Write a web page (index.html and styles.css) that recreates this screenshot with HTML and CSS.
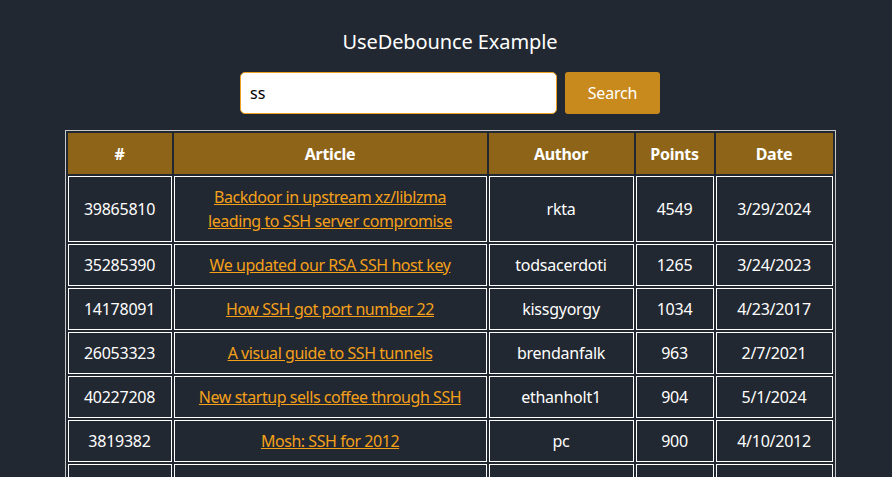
FILE: index.html
```html
<!DOCTYPE html>
<html lang="en">
<head>
<meta charset="utf-8">
<title>UseDebounce Example</title>
<link rel="stylesheet" href="styles.css">
</head>
<body>
<main class="page">
  <h1 class="title">UseDebounce Example</h1>
  <form class="search">
    <input class="search-input" type="text" value="ss">
    <button class="search-btn" type="button">Search</button>
  </form>
  <table class="results">
    <colgroup>
      <col class="c-id"><col class="c-article"><col class="c-author"><col class="c-points"><col class="c-date">
    </colgroup>
    <thead>
      <tr><th>#</th><th>Article</th><th>Author</th><th>Points</th><th>Date</th></tr>
    </thead>
    <tbody>
      <tr><td>39865810</td><td class="article"><a href="#">Backdoor in upstream xz/liblzma leading to SSH server compromise</a></td><td>rkta</td><td>4549</td><td>3/29/2024</td></tr>
      <tr><td>35285390</td><td class="article"><a href="#">We updated our RSA SSH host key</a></td><td>todsacerdoti</td><td>1265</td><td>3/24/2023</td></tr>
      <tr><td>14178091</td><td class="article"><a href="#">How SSH got port number 22</a></td><td>kissgyorgy</td><td>1034</td><td>4/23/2017</td></tr>
      <tr><td>26053323</td><td class="article"><a href="#">A visual guide to SSH tunnels</a></td><td>brendanfalk</td><td>963</td><td>2/7/2021</td></tr>
      <tr><td>40227208</td><td class="article"><a href="#">New startup sells coffee through SSH</a></td><td>ethanholt1</td><td>904</td><td>5/1/2024</td></tr>
      <tr><td>3819382</td><td class="article"><a href="#">Mosh: SSH for 2012</a></td><td>pc</td><td>900</td><td>4/10/2012</td></tr>
      <tr><td>20786051</td><td class="article"><a href="#">SSH Tips and Tricks</a></td><td>sams99</td><td>881</td><td>8/24/2019</td></tr>
    </tbody>
  </table>
</main>
</body>
</html>
```

FILE: styles.css
```css
html, body {
  margin: 0;
  padding: 0;
  background: #222831;
}

body {
  color: #ffffff;
  font-family: "Noto Sans", "Open Sans", sans-serif;
  font-size: 16px;
}

.page {
  display: flex;
  flex-direction: column;
  align-items: center;
  padding: 28px 0 0 8px;
}

.title {
  margin: 0;
  font-size: 20px;
  font-weight: 400;
  line-height: 28px;
  letter-spacing: -0.1px;
}

.search {
  display: flex;
  gap: 8px;
  margin-top: 16px;
}

.search-input {
  box-sizing: border-box;
  width: 317px;
  height: 42px;
  padding: 0 9px;
  border: 1px solid #f0a020;
  border-radius: 5px;
  background: #ffffff;
  color: #000000;
  font-family: inherit;
  font-size: 16px;
  outline: none;
}

.search-btn {
  box-sizing: border-box;
  width: 95px;
  height: 42px;
  border: none;
  border-radius: 3px;
  background: #c98a1d;
  color: #ffffff;
  font-family: inherit;
  font-size: 16px;
  letter-spacing: -0.2px;
}

.results {
  margin-top: 16px;
  width: 770px;
  table-layout: fixed;
  border: 1px solid #c8c8c8;
  border-spacing: 2px;
}

.c-id { width: 104px; }
.c-article { width: 313px; }
.c-author { width: 145px; }
.c-points { width: 78px; }
.c-date { width: 117px; }

.results th {
  background: #8e6518;
  border: 1px solid #8e6518;
  padding: 8px 6px 7px;
  font-weight: 700;
  line-height: 24px;
  letter-spacing: -0.3px;
}

.results td {
  border: 1px solid #ffffff;
  padding: 8px 6px;
  text-align: center;
  line-height: 24px;
  letter-spacing: -0.25px;
}

.results td.article {
  padding: 8px 18px;
}

.results a {
  color: #f5a01a;
  text-decoration: underline;
  letter-spacing: -0.45px;
}
```
